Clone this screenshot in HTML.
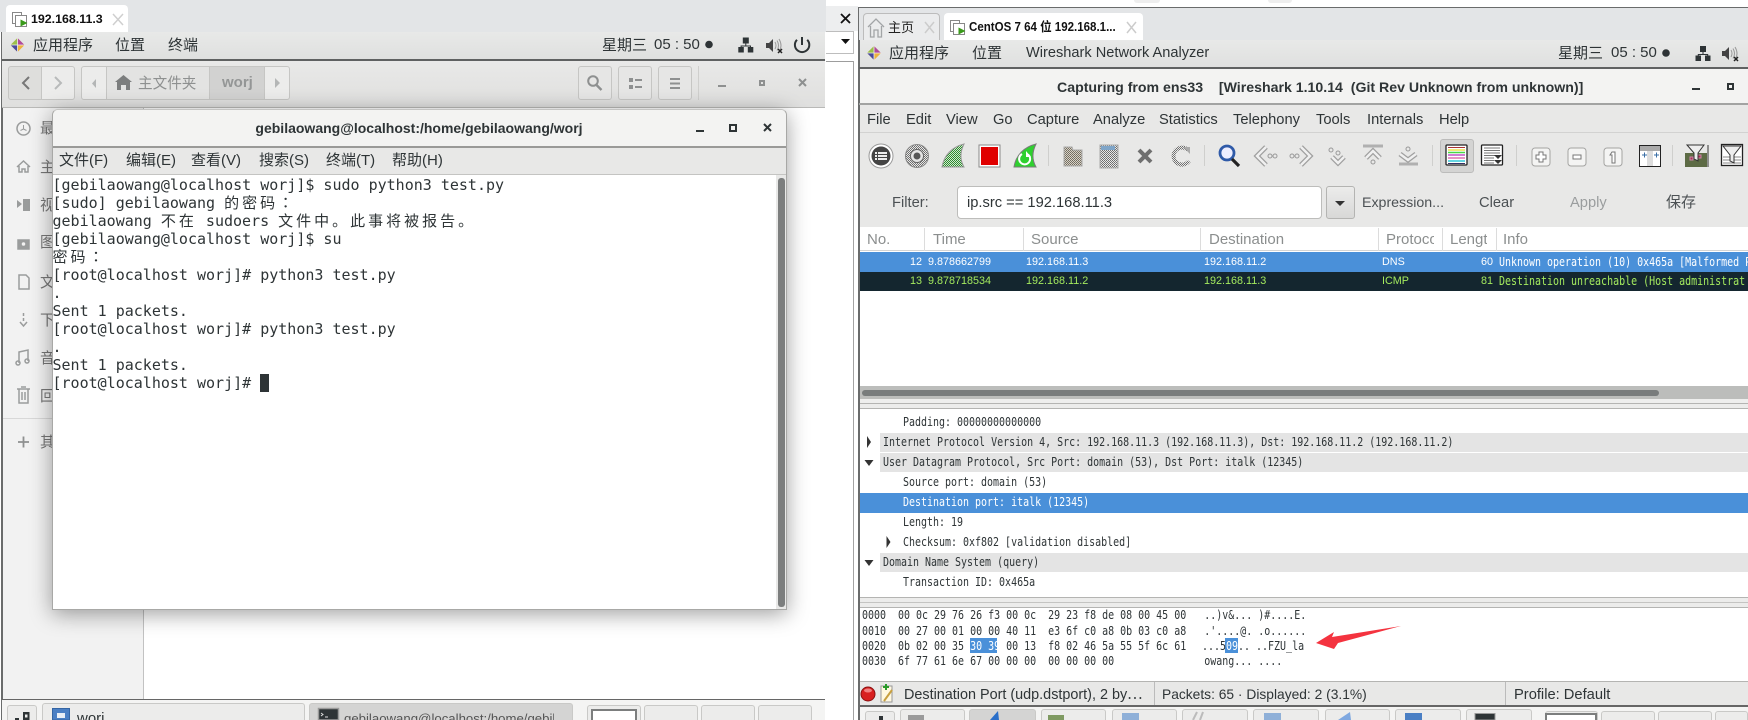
<!DOCTYPE html>
<html><head><meta charset="utf-8"><style>
html,body{margin:0;padding:0;width:1748px;height:720px;overflow:hidden;background:#fff}
*{box-sizing:border-box}
.a{position:absolute}
.t{position:absolute;white-space:pre;line-height:20px;height:20px;font:14.7px/20px "Liberation Sans","Noto Sans CJK SC",sans-serif;color:#2e3436}
.c{font-family:"Noto Sans CJK SC","Liberation Sans",sans-serif}
.m{position:absolute;white-space:pre;font:12px/16px "DejaVu Sans Mono",monospace;color:#2e3436;transform:scaleX(.831);transform-origin:0 0;height:16px}
.tm{position:absolute;left:52.5px;white-space:pre;font:15px/18px "DejaVu Sans Mono",monospace;color:#2e3436;height:18px}
.tm span{font-family:"Noto Sans CJK SC",sans-serif;letter-spacing:3px;font-size:15px}
.tm span.k{font-family:"Noto Sans CJK TC",sans-serif}
.n{position:absolute;white-space:pre;font:10.8px/16px "Liberation Sans",sans-serif;height:16px}
.b{position:absolute;border:1px solid #c6c6c4;border-radius:3px}
.hd{position:absolute;white-space:pre;font:15px/20px "Liberation Sans",sans-serif;color:#8b8e8e;top:230px}
.dv{position:absolute;width:1px;top:228px;height:23px;background:#dcdcdc}
.gr{position:absolute;left:880px;width:868px;height:19px;background:#e4e4e4}
.tb{position:absolute;background:#ececeb;border:1px solid #c9c9c7;border-bottom:0;border-radius:3px 3px 0 0}
.clip{position:absolute;overflow:hidden;height:16px;left:1499px;width:249px}
</style></head><body>

<!-- LEFT VM -->
<div class="a" style="left:0;top:0;width:826px;height:32px;background:#e3e5e7"></div>
<div class="a" style="left:6px;top:5px;width:122px;height:27px;background:#fff;border-radius:4px 4px 0 0"></div>
<div class="t" style="left:31px;top:9px;font-size:12.4px;font-weight:bold;color:#111">192.168.11.3</div>
<div class="a" style="left:1px;top:32px;width:1.5px;height:688px;background:#6a6c6c"></div>
<div class="a" style="left:2px;top:32px;width:823px;height:27px;background:linear-gradient(#e8e9e8,#dfe0df)"></div>
<div class="a" style="left:2px;top:59px;width:823px;height:1.5px;background:#5f6161"></div>
<div class="t c" style="left:33px;top:35px;font-size:15px">应用程序</div>
<div class="t c" style="left:115px;top:35px;font-size:15px">位置</div>
<div class="t c" style="left:168px;top:35px;font-size:15px">终端</div>
<div class="t c" style="left:602px;top:35px;font-size:15px">星期三</div>
<div class="t" style="left:654px;top:35px;font-size:15px">05 : 50</div>

<div class="a" style="left:2px;top:61px;width:823px;height:46px;background:linear-gradient(#e9e9e8,#dfdfde)"></div>
<div class="a" style="left:2px;top:107px;width:823px;height:1px;background:#b9b9b7"></div>
<div class="b" style="left:8px;top:66px;width:34px;height:34px;background:#dededc;border-radius:3px 0 0 3px"></div>
<div class="b" style="left:41px;top:66px;width:34px;height:34px;background:#ececeb;border-radius:0 3px 3px 0"></div>
<div class="b" style="left:81px;top:66px;width:26px;height:34px;background:#ececeb;border-radius:3px 0 0 3px"></div>
<div class="b" style="left:106px;top:66px;width:104px;height:34px;background:#e3e3e2;border-radius:0"></div>
<div class="b" style="left:209px;top:66px;width:56px;height:34px;background:#d2d2d1;border-radius:0"></div>
<div class="b" style="left:264px;top:66px;width:26px;height:34px;background:#ececeb;border-radius:0 3px 3px 0"></div>
<div class="t c" style="left:138px;top:73px;font-size:14.6px;color:#8e9090">主文件夹</div>
<div class="t" style="left:222px;top:73px;font-size:15px;font-weight:bold;color:#949696">worj</div>
<div class="b" style="left:578px;top:66px;width:34px;height:34px;background:#e6e6e5"></div>
<div class="b" style="left:618px;top:66px;width:34px;height:34px;background:#e6e6e5"></div>
<div class="b" style="left:658px;top:66px;width:34px;height:34px;background:#e6e6e5"></div>
<div class="a" style="left:698px;top:66px;width:1px;height:34px;background:#cfcfcd"></div>

<!-- sidebar -->
<div class="a" style="left:2.5px;top:108px;width:141px;height:591px;background:#f2f2f2;border-right:1px solid #c2c2c2"></div>
<div class="a" style="left:2.5px;top:418px;width:141px;height:1px;background:#d8d8d8"></div>
<div class="t c" style="left:40px;top:118px;font-size:15px;color:#777">最近使用</div>
<div class="t c" style="left:40px;top:157px;font-size:15px;color:#777">主目录</div>
<div class="t c" style="left:40px;top:195px;font-size:15px;color:#777">视频</div>
<div class="t c" style="left:40px;top:232px;font-size:15px;color:#777">图片</div>
<div class="t c" style="left:40px;top:272px;font-size:15px;color:#777">文档</div>
<div class="t c" style="left:40px;top:310px;font-size:15px;color:#777">下载</div>
<div class="t c" style="left:40px;top:348px;font-size:15px;color:#777">音乐</div>
<div class="t c" style="left:40px;top:386px;font-size:15px;color:#777">回收站</div>
<div class="t c" style="left:40px;top:432px;font-size:15px;color:#777">其他位置</div>

<!-- left taskbar -->
<div class="a" style="left:2px;top:699px;width:823px;height:1.5px;background:#666"></div>
<div class="a" style="left:2px;top:700px;width:823px;height:20px;background:#f4f4f3"></div>
<div class="tb" style="left:7px;top:705px;width:30px;height:15px"></div>
<div class="tb" style="left:42px;top:703px;width:263px;height:17px"></div>
<div class="tb" style="left:309px;top:703px;width:264px;height:17px;background:#d4d4d3"></div>
<div class="t" style="left:77px;top:709px;height:11px;overflow:hidden;font-size:15px">worj</div>
<div class="t" style="left:344px;top:709px;height:11px;font-size:13.2px;width:210px;overflow:hidden;color:#555">gebilaowang@localhost:/home/gebilaowang</div>
<div class="tb" style="left:587px;top:705px;width:54px;height:15px"></div>
<div class="a" style="left:591px;top:709px;width:46px;height:11px;background:#fff;border:2px solid #7c7e7e;border-bottom:0"></div>
<div class="tb" style="left:644px;top:705px;width:54px;height:15px"></div>
<div class="tb" style="left:701px;top:705px;width:54px;height:15px"></div>
<div class="tb" style="left:758px;top:705px;width:54px;height:15px"></div>

<!-- RIGHT VM -->
<div class="a" style="left:826px;top:6px;width:32px;height:25px;background:#edeeef"></div>
<div class="a" style="left:1134px;top:0;width:26px;height:3px;background:#eee;border-radius:0 0 3px 3px"></div>
<div class="a" style="left:1268px;top:0;width:24px;height:3px;background:#eee;border-radius:0 0 3px 3px"></div>
<div class="a" style="left:826px;top:31px;width:28px;height:23px;background:#fff;border:1px solid #bdbdbd;border-left:0"></div>
<div class="a" style="left:826px;top:61px;width:28px;height:1px;background:#9d9d9d"></div>
<div class="a" style="left:853px;top:61px;width:1px;height:659px;background:#a3a3a3"></div>
<div class="a" style="left:858px;top:7px;width:1.5px;height:713px;background:#6a6c6c"></div>
<div class="a" style="left:858px;top:7px;width:890px;height:1px;background:#6a6c6c"></div>
<div class="a" style="left:859px;top:8px;width:889px;height:32px;background:#e3e5e7"></div>
<div class="a" style="left:863px;top:13px;width:77px;height:27px;background:#ebeced;border:1px solid #bcbcbc;border-bottom:0;border-radius:4px 4px 0 0"></div>
<div class="a" style="left:944px;top:13px;width:199px;height:27px;background:#fff;border-radius:4px 4px 0 0"></div>
<div class="t c" style="left:888px;top:17px;font-size:13px;color:#222">主页</div>
<div class="t" style="left:969px;top:17px;font-size:12.6px;font-weight:bold;color:#111;transform:scaleX(.915);transform-origin:0 0">CentOS 7 64 位 192.168.1...</div>
<div class="a" style="left:860px;top:40px;width:888px;height:27px;background:linear-gradient(#e8e9e8,#dfe0df)"></div>
<div class="a" style="left:859px;top:67px;width:889px;height:1.5px;background:#5f6161"></div>
<div class="t c" style="left:889px;top:43px;font-size:15px">应用程序</div>
<div class="t c" style="left:972px;top:43px;font-size:15px">位置</div>
<div class="t" style="left:1026px;top:43px;font-size:14.6px">Wireshark Network Analyzer</div>
<div class="t c" style="left:1558px;top:43px;font-size:15px">星期三</div>
<div class="t" style="left:1611px;top:43px;font-size:15px">05 : 50</div>

<div class="a" style="left:860px;top:69px;width:888px;height:34px;background:#f3f3f2"></div>
<div class="a" style="left:859px;top:103px;width:889px;height:1.5px;background:#a2a3a2"></div>
<div class="t" style="left:1057px;top:77px;font-size:14.15px;font-weight:bold;color:#2e3436">Capturing from ens33    [Wireshark 1.10.14  (Git Rev Unknown from unknown)]</div>
<div class="a" style="left:860px;top:105px;width:888px;height:122px;background:#e8e8e7"></div>
<div class="a" style="left:860px;top:132px;width:888px;height:1px;background:#d2d2d1"></div>
<div class="t" style="left:867px;top:110px">File</div>
<div class="t" style="left:906px;top:110px">Edit</div>
<div class="t" style="left:946px;top:110px">View</div>
<div class="t" style="left:993px;top:110px">Go</div>
<div class="t" style="left:1027px;top:110px">Capture</div>
<div class="t" style="left:1093px;top:110px">Analyze</div>
<div class="t" style="left:1159px;top:110px">Statistics</div>
<div class="t" style="left:1233px;top:110px">Telephony</div>
<div class="t" style="left:1316px;top:110px">Tools</div>
<div class="t" style="left:1367px;top:110px">Internals</div>
<div class="t" style="left:1439px;top:110px">Help</div>

<div class="a" style="left:1440px;top:139px;width:34px;height:34px;background:#d4d4d3;border:1px solid #bcbcbb;border-radius:3px"></div>

<div class="t" style="left:892px;top:193px;color:#4c5154">Filter:</div>
<div class="a" style="left:957px;top:186px;width:365px;height:33px;background:#fff;border:1px solid #bdbdbb;border-radius:4px"></div>
<div class="t" style="left:967px;top:193px">ip.src == 192.168.11.3</div>
<div class="a" style="left:1326px;top:186px;width:29px;height:33px;background:linear-gradient(#ececeb,#d8d8d7);border:1px solid #b4b4b2;border-radius:3px"></div>
<div class="t" style="left:1362px;top:193px;font-size:14.2px;color:#4c5154">Expression...</div>
<div class="t" style="left:1479px;top:193px;color:#4c5154">Clear</div>
<div class="t" style="left:1570px;top:193px;color:#9a9d9e">Apply</div>
<div class="t c" style="left:1666px;top:192px;color:#4c5154;font-size:15px">保存</div>

<!-- packet list -->
<div class="a" style="left:860px;top:227px;width:888px;height:24px;background:#fff;border-bottom:1px solid #d4d4d4"></div>
<div class="hd" style="left:867px">No.</div><div class="dv" style="left:924px"></div>
<div class="hd" style="left:933px">Time</div><div class="dv" style="left:1023px"></div>
<div class="hd" style="left:1031px">Source</div><div class="dv" style="left:1200px"></div>
<div class="hd" style="left:1209px">Destination</div><div class="dv" style="left:1378px"></div>
<div class="hd" style="left:1386px;width:48px;overflow:hidden">Protocol</div><div class="dv" style="left:1442px"></div>
<div class="hd" style="left:1450px;width:37px;overflow:hidden">Length</div><div class="dv" style="left:1496px"></div>
<div class="hd" style="left:1503px">Info</div>

<div class="a" style="left:860px;top:252px;width:888px;height:20px;background:#4a90d9"></div>
<div class="a" style="left:860px;top:272px;width:888px;height:19px;background:#14262f"></div>
<div class="n" style="left:910px;top:254px;color:#fff">12</div>
<div class="n" style="left:928px;top:254px;color:#fff">9.878662799</div>
<div class="n" style="left:1026px;top:254px;color:#fff">192.168.11.3</div>
<div class="n" style="left:1204px;top:254px;color:#fff">192.168.11.2</div>
<div class="n" style="left:1382px;top:254px;color:#fff">DNS</div>
<div class="n" style="left:1481px;top:254px;color:#fff">60</div>
<div class="clip" style="top:254px"><div class="m" style="left:0;top:0;color:#fff">Unknown operation (10) 0x465a [Malformed P</div></div>
<div class="n" style="left:910px;top:273px;color:#a4ea5e">13</div>
<div class="n" style="left:928px;top:273px;color:#a4ea5e">9.878718534</div>
<div class="n" style="left:1026px;top:273px;color:#a4ea5e">192.168.11.2</div>
<div class="n" style="left:1204px;top:273px;color:#a4ea5e">192.168.11.3</div>
<div class="n" style="left:1382px;top:273px;color:#a4ea5e">ICMP</div>
<div class="n" style="left:1481px;top:273px;color:#a4ea5e">81</div>
<div class="clip" style="top:273px"><div class="m" style="left:0;top:0;color:#a4ea5e">Destination unreachable (Host administrat</div></div>

<!-- hscroll -->
<div class="a" style="left:860px;top:386px;width:888px;height:13px;background:#bcbdbb"></div>
<div class="a" style="left:862px;top:390px;width:797px;height:6px;background:#797c7c;border-radius:3px"></div>
<div class="a" style="left:860px;top:399px;width:888px;height:4px;background:#eeeeed"></div>
<div class="a" style="left:860px;top:403px;width:888px;height:1px;background:#b4b4b2"></div>
<div class="a" style="left:860px;top:404px;width:888px;height:4px;background:#ececeb"></div>
<div class="a" style="left:860px;top:408px;width:888px;height:1px;background:#b4b4b2"></div>

<!-- details -->
<div class="gr" style="top:433px"></div>
<div class="gr" style="top:453px"></div>
<div class="gr" style="top:553px"></div>
<div class="a" style="left:860px;top:493px;width:888px;height:20px;background:#4a90d9"></div>
<div class="m" style="left:903px;top:414px">Padding: 00000000000000</div>
<div class="m" style="left:883px;top:434px">Internet Protocol Version 4, Src: 192.168.11.3 (192.168.11.3), Dst: 192.168.11.2 (192.168.11.2)</div>
<div class="m" style="left:883px;top:454px">User Datagram Protocol, Src Port: domain (53), Dst Port: italk (12345)</div>
<div class="m" style="left:903px;top:474px">Source port: domain (53)</div>
<div class="m" style="left:903px;top:494px;color:#fff">Destination port: italk (12345)</div>
<div class="m" style="left:903px;top:514px">Length: 19</div>
<div class="m" style="left:903px;top:534px">Checksum: 0xf802 [validation disabled]</div>
<div class="m" style="left:883px;top:554px">Domain Name System (query)</div>
<div class="m" style="left:903px;top:574px">Transaction ID: 0x465a</div>

<div class="a" style="left:860px;top:597px;width:888px;height:1px;background:#b4b4b2"></div>
<div class="a" style="left:860px;top:598px;width:888px;height:9px;background:#ececeb"></div>
<div class="a" style="left:860px;top:602px;width:888px;height:1px;background:#c4c4c2"></div>
<div class="a" style="left:860px;top:607px;width:888px;height:1px;background:#b4b4b2"></div>

<!-- hex -->
<div class="a" style="left:970px;top:638px;width:27px;height:15px;background:#4a90d9"></div>
<div class="a" style="left:1225px;top:638px;width:13px;height:15px;background:#4a90d9"></div>
<div class="m" style="left:862px;top:607px">0000  00 0c 29 76 26 f3 00 0c  29 23 f8 de 08 00 45 00   ..)v&amp;... )#....E.</div>
<div class="m" style="left:862px;top:622.5px">0010  00 27 00 01 00 00 40 11  e3 6f c0 a8 0b 03 c0 a8   .'....@. .o......</div>
<div class="m" style="left:862px;top:638px">0020  0b 02 00 35 <span style="color:#fff">30 39</span> 00 13  f8 02 46 5a 55 5f 6c 61</div>
<div class="m" style="left:1202px;top:638px">...5<span style="color:#fff">09</span>.. ..FZU_la</div>
<div class="m" style="left:862px;top:653px">0030  6f 77 61 6e 67 00 00 00  00 00 00 00               owang... ....</div>

<!-- status bar -->
<div class="a" style="left:860px;top:681px;width:888px;height:1px;background:#b4b4b2"></div>
<div class="a" style="left:860px;top:682px;width:888px;height:23px;background:#e8e8e7"></div>
<div class="a" style="left:860px;top:705px;width:888px;height:1.5px;background:#666"></div>
<div class="a" style="left:1154px;top:682px;width:1px;height:23px;background:#bbb"></div>
<div class="a" style="left:1505px;top:682px;width:1px;height:23px;background:#bbb"></div>
<div class="t" style="left:904px;top:685px;font-size:14.4px">Destination Port (udp.dstport), 2 by⋯</div>
<div class="t" style="left:1162px;top:685px;font-size:13.8px">Packets: 65 · Displayed: 2 (3.1%)</div>
<div class="t" style="left:1514px;top:685px">Profile: Default</div>

<!-- right taskbar -->
<div class="a" style="left:860px;top:707px;width:888px;height:13px;background:#f4f4f3"></div>
<div class="tb" style="left:865px;top:711px;width:30px;height:9px"></div>
<div class="tb" style="left:900px;top:709px;width:65px;height:11px"></div>
<div class="tb" style="left:969px;top:709px;width:67px;height:11px;background:#d4d4d3"></div>
<div class="tb" style="left:1041px;top:709px;width:65px;height:11px"></div>
<div class="tb" style="left:1112px;top:709px;width:65px;height:11px"></div>
<div class="tb" style="left:1182px;top:709px;width:66px;height:11px"></div>
<div class="tb" style="left:1253px;top:709px;width:66px;height:11px"></div>
<div class="tb" style="left:1325px;top:709px;width:65px;height:11px"></div>
<div class="tb" style="left:1395px;top:709px;width:66px;height:11px"></div>
<div class="tb" style="left:1466px;top:709px;width:66px;height:11px"></div>
<div class="tb" style="left:1545px;top:711px;width:53px;height:9px"></div>
<div class="a" style="left:1545px;top:713px;width:52px;height:7px;background:#fff;border:2px solid #7c7e7e;border-bottom:0"></div>
<div class="tb" style="left:1601px;top:711px;width:54px;height:9px"></div>
<div class="tb" style="left:1658px;top:711px;width:54px;height:9px"></div>
<div class="tb" style="left:1715px;top:711px;width:33px;height:9px"></div>

<!-- ICONS -->
<svg class="a" style="left:0;top:0" width="1748" height="720" viewBox="0 0 1748 720">
<defs>
<pattern id="dg" width="2" height="2" patternUnits="userSpaceOnUse"><rect width="2" height="2" fill="#e8e8e7"/><rect width="1" height="1" fill="#6b6b6b"/><rect x="1" y="1" width="1" height="1" fill="#777"/></pattern>
<pattern id="dn" width="2" height="2" patternUnits="userSpaceOnUse"><rect width="2" height="2" fill="#d8d2c6"/><rect width="1" height="1" fill="#6f6a5e"/><rect x="1" y="1" width="1" height="1" fill="#7a7468"/></pattern>
<pattern id="dgr" width="2" height="2" patternUnits="userSpaceOnUse"><rect width="2" height="2" fill="#cfe8cf"/><rect width="1" height="1" fill="#2e8b2e"/><rect x="1" y="1" width="1" height="1" fill="#2e8b2e"/></pattern>
<g id="logo"><path d="M0-7L7 0 0 7-7 0Z" fill="#d9b56a"/><path d="M0-7L7 0H0Z" fill="#b04a9c"/><path d="M0-7L-7 0H0Z" fill="#9bbf4a"/><path d="M-7 0L0 7V0Z" fill="#4a4a9c"/><path d="M7 0L0 7V0Z" fill="#eeb23e"/><path d="M0-7V7M-7 0H7" stroke="#eee" stroke-width=".8"/></g>
<g id="net" fill="#2e3436"><rect x="4.5" y="0" width="6" height="6"/><rect x="0" y="9.5" width="5.5" height="5.5"/><rect x="9.5" y="9.5" width="5.5" height="5.5"/><path d="M7 5.5h1v2.500h4.700v2h-1v-1H3.300v1h-1v-2H7z"/></g>
<g id="spk"><path d="M0 5h3l4-4v13l-4-4H0z" fill="#444"/><path d="M9 4q2 3.500 0 7M11 2.500q3 5 0 10M13 1q4 6.500 0 13" fill="none" stroke="#999" stroke-width="1"/><path d="M12 11l4 4M16 11l-4 4" stroke="#222" stroke-width="1.500"/></g>
<g id="pi"><rect x="0" y="0" width="9" height="11" fill="none" stroke="#888"/><rect x="3" y="3" width="11" height="11" fill="#fff" stroke="#888"/><path d="M8 7l7 3.500-7 3.500z" fill="#3a9a1a"/></g>
</defs>

<!-- left top -->
<use href="#pi" x="12.500" y="12.500"/>
<path d="M113 14l10 11M123 14l-10 11" stroke="#cfcfcf" stroke-width="1.500"/>
<use href="#logo" x="17.500" y="45"/>
<circle cx="709" cy="44.500" r="3.800" fill="#2e3436"/>
<use href="#net" x="738.300" y="37.500"/>
<use href="#spk" x="766" y="38"/>
<path d="M797 39.800a7.200 7.200 0 1 0 10.200 0" fill="none" stroke="#2e3436" stroke-width="2"/><path d="M802 37v8" stroke="#2e3436" stroke-width="2"/>

<!-- nautilus -->
<path d="M29 77l-6 6 6 6" fill="none" stroke="#777" stroke-width="2"/>
<path d="M55 77l6 6-6 6" fill="none" stroke="#b8baba" stroke-width="2"/>
<path d="M96 79l-4 4.500 4 4.500z" fill="#b4b6b6"/>
<path d="M275 78l5 5-5 5z" fill="#b4b6b6"/>
<path d="M115 82l8.500-7 8.500 7h-2v8h-4v-5h-5v5h-4v-8z" fill="#7c7e7e"/>
<circle cx="593" cy="81" r="4.800" fill="none" stroke="#8e9090" stroke-width="2"/><path d="M596.500 85l5 5" stroke="#8e9090" stroke-width="2.400"/>
<path d="M629 78h4v4h-4zM629 85h4v4h-4zM635 79h7v2h-7zM635 86h7v2h-7z" fill="#8e9090"/>
<path d="M670 78h10v2h-10zM670 82.500h10v2h-10zM670 87h10v2h-10z" fill="#8e9090"/>
<path d="M718 85h8v2h-8z" fill="#8e9090"/>
<path d="M759 80h6v6h-6zM761 82v2h2v-2z" fill="#8e9090" fill-rule="evenodd"/>
<path d="M799 79l7 7M806 79l-7 7" stroke="#8e9090" stroke-width="2"/>

<!-- sidebar icons -->
<g fill="none" stroke="#9a9c9c" stroke-width="1.500">
<circle cx="23.500" cy="128.500" r="6.500"/><path d="M23.500 125v4l-3 1.500M23.500 129l3 1.500" stroke-width="1"/>
<path d="M17 167l6.500-6 6.500 6M19 166v6h3v-3h3v3h3v-6"/>
<path d="M17 200v8l5-4zM23 199h7v12h-7z" fill="#9a9c9c" stroke="none"/>
<path d="M18 240h11v9h-11z" fill="#9a9c9c"/><circle cx="23.500" cy="244" r="2.500" fill="#f2f2f2"/>
<path d="M19 275h7l3 3v11h-10z"/>
<path d="M23.500 313v3M23.500 318v3M20 322l3.500 4 3.500-4" />
<path d="M19 363v-11l9-2v11" /><circle cx="18" cy="363" r="2"/><circle cx="27" cy="361" r="2"/>
<path d="M17 389h13M19 389v14h9v-14M21 387h5M22 392v8M25 392v8"/>
<path d="M18 442h11M23.500 436.500v11" stroke="#8e9090" stroke-width="1.800"/>
</g>

<!-- left taskbar icons -->
<path d="M15 718h4v2h-4zM23 712h6.500v8h-6.500zM25 714.500v3h2.500v-3z" fill="#2e3436" fill-rule="evenodd"/>
<rect x="52.500" y="708.500" width="17" height="11.500" fill="#4a7fc4" stroke="#3465a4"/><rect x="57" y="713" width="8" height="5" fill="#e8eef6"/>
<rect x="318.500" y="708.500" width="20" height="11.500" fill="#2e3436" stroke="#9a9a9a" stroke-width="1.500"/><path d="M321 713l2 1.500-2 1.500M325 717h3" stroke="#ddd" fill="none"/>

<!-- right top -->
<path d="M841 14l9 9M850 14l-9 9" stroke="#111" stroke-width="1.800"/>
<path d="M841 39h9l-4.500 5z" fill="#111"/>
<path d="M868 27l8-8 8 8M870.500 26v11h3.500v-7h4v7h3.500v-11" fill="none" stroke="#a2a5a7" stroke-width="1.300"/>
<path d="M925 22l9 11M934 22l-9 11" stroke="#ccc" stroke-width="1.500"/>
<use href="#pi" x="950.500" y="20.500"/>
<path d="M1127 22l9 11M1136 22l-9 11" stroke="#ccc" stroke-width="1.500"/>
<use href="#logo" x="874" y="53"/>
<circle cx="1666" cy="53" r="3.800" fill="#2e3436"/>
<use href="#net" x="1695.500" y="46"/>
<use href="#spk" x="1722" y="46"/>
<path d="M1692 88h8v2h-8zM1727 83h7v7h-7zM1729 85v3h3v-3z" fill="#2e3436" fill-rule="evenodd"/>

<!-- toolbar -->
<circle cx="881" cy="156" r="12" fill="#fff" stroke="#9a9a9a"/><circle cx="881" cy="156" r="9.500" fill="#444"/>
<path d="M875 152h2v2h-2zM878 152h9v2h-9zM875 155h2v2h-2zM878 155h9v2h-9zM875 158h2v2h-2zM878 158h9v2h-9z" fill="#eee"/>
<circle cx="917" cy="156" r="11.500" fill="url(#dg)" stroke="#888"/><circle cx="917" cy="156" r="6.500" fill="#e4e4e4" stroke="#666"/><circle cx="917" cy="156" r="3.500" fill="#555"/>
<path d="M942 167C944 155 952 147 964 144 960 152 960 160 964 167Z" fill="url(#dgr)" stroke="#999"/>
<rect x="979" y="145" width="21" height="22" fill="#fff" stroke="#8a8a8a"/><rect x="981" y="147" width="17" height="18" fill="#e00000"/>
<path d="M1014 167C1016 155 1024 147 1036 144 1032 152 1032 160 1036 167Z" fill="#2fd02f" stroke="#7a7a7a"/>
<path d="M1022 154a5.500 5.500 0 1 0 6 .5" fill="none" stroke="#fff" stroke-width="2"/><path d="M1026 151v6h5z" fill="#fff"/>
<path d="M1048.500 145v21M1204.500 145v21M1432.500 145v21M1516.500 145v21M1672.500 145v21" stroke="#cfcfcd"/>
<path d="M1064 147h8l1 3h9v16h-18z" fill="url(#dn)" stroke="#aaa"/>
<path d="M1100 145h18v23h-18z" fill="url(#dg)" stroke="#aaa"/><path d="M1101 146h14v4h-14z" fill="#7fa5c8"/>
<path d="M1139 150l12 12M1151 150l-12 12" stroke="#6f6f6f" stroke-width="4"/>
<path d="M1188 150a8.500 8.500 0 1 0 1 11" fill="none" stroke="url(#dg)" stroke-width="4"/><path d="M1183 147h7v7z" fill="#aaa"/>
<circle cx="1227" cy="153" r="7" fill="#eef" stroke="#2f5aa8" stroke-width="2.800"/><path d="M1232 159l7 7" stroke="#222" stroke-width="3.200"/>
<g fill="none" stroke="#a0a0a0" stroke-width="5">
<path d="M1266 147l-9 9 9 9"/><path d="M1301 147l9 9-9 9"/><path d="M1332 157l6 6 6-6"/><path d="M1366 158l7-7 7 7"/><path d="M1400 154l8 6 8-6"/>
</g>
<g fill="none" stroke="#f0f0f0" stroke-width="2.400">
<path d="M1266 147l-9 9 9 9"/><path d="M1301 147l9 9-9 9"/><path d="M1332 157l6 6 6-6"/><path d="M1366 158l7-7 7 7"/><path d="M1400 154l8 6 8-6"/>
</g>
<g fill="none" stroke="#999"><circle cx="1270" cy="156" r="2"/><circle cx="1275" cy="156" r="2"/><circle cx="1297" cy="156" r="2"/><circle cx="1292" cy="156" r="2"/><circle cx="1331" cy="150" r="2"/><circle cx="1338" cy="153" r="2"/><circle cx="1373" cy="162" r="2"/><circle cx="1408" cy="149" r="2"/></g>
<path d="M1363 146h20M1399 164h19" stroke="#b0b0b0" stroke-width="3"/>
<rect x="1446" y="145" width="21" height="20" rx="1" fill="#fff" stroke="#222" stroke-width="1.300"/>
<path d="M1448 147.500h17" stroke="#a33"/><path d="M1448 150h17" stroke="#eee44c" stroke-width="1.500"/><path d="M1448 152.500h17" stroke="#48d848" stroke-width="1.500"/><path d="M1448 155h17" stroke="#c050c8" stroke-width="1.500"/><path d="M1448 158h17" stroke="#e070b0" stroke-width="1.500"/><path d="M1448 161h17" stroke="#30c8d8" stroke-width="1.500"/><path d="M1448 163.500h17" stroke="#336" />
<rect x="1481.500" y="145" width="21" height="20" rx="1" fill="#fff" stroke="#222" stroke-width="1.300"/>
<path d="M1484 148h16M1484 150.500h16M1484 153h16M1484 155.500h16M1484 158h10M1484 160.500h10M1484 163h10" stroke="#777"/><path d="M1494 155h8l-4 4zM1494 160h8l-4 4z" fill="#333"/>
<g fill="#f4f4f3" stroke="#a4a4a2"><rect x="1532" y="148" width="18" height="18" rx="3"/><rect x="1568" y="148" width="18" height="18" rx="3"/><rect x="1604" y="148" width="18" height="18" rx="3"/></g>
<path d="M1539 152h4v3h3v4h-3v3h-4v-3h-3v-4h3z" fill="#fff" stroke="#777"/><path d="M1573 155h8v4h-8z" fill="#fff" stroke="#777"/><path d="M1612 152h3v11h-3v-8h-2z" fill="#fff" stroke="#777"/>
<rect x="1639.500" y="145.500" width="21" height="21" fill="#fff" stroke="#222"/><rect x="1640" y="146" width="20" height="5" fill="#aaa"/><rect x="1647" y="151" width="6" height="15" fill="#ddd"/><path d="M1642 155h5M1654 155h5M1644.500 152.500v5M1656.500 152.500v5" stroke="#3a6ea5"/>
<rect x="1685" y="153" width="22" height="14" fill="#5d6b45"/><path d="M1690 157h3v3h-3zM1698 155h3v3h-3z" fill="#a35" stroke="#c8a"/><path d="M1687 145h17l-6 8v8l-4-2v-6z" fill="#eee" stroke="#333"/><path d="M1708 145v22" stroke="#333"/>
<rect x="1721.500" y="144.500" width="21" height="21" fill="#fff" stroke="#222" stroke-width="1.300"/><path d="M1723 157h18M1723 160h18M1723 163h18" stroke="#888"/><path d="M1723 146h18l-7 9v8l-4-2v-6z" fill="#eee" stroke="#333"/>
<path d="M1335 201h10l-5 5z" fill="#333"/>

<!-- tree arrows -->
<path d="M867 436v12l4-6z" fill="#333"/><path d="M886.500 536v12l4-6z" fill="#333"/>
<path d="M864.500 460h9l-4.500 6z" fill="#333"/><path d="M864.500 560h9l-4.500 6z" fill="#333"/>

<!-- status icons -->
<circle cx="868" cy="694" r="7" fill="#d82020" stroke="#8a1010"/><ellipse cx="868" cy="690.500" rx="4" ry="2" fill="#f08080"/>
<rect x="881" y="686" width="11" height="16" fill="#fff8e0" stroke="#999"/><path d="M884 701l8-11" stroke="#c8a040" stroke-width="2"/><path d="M886 684v6M883 687h6" stroke="#2a9a2a" stroke-width="2"/>

<!-- taskbar right icons -->
<path d="M879 716h4v4h-4z" fill="#2e3436"/>
<rect x="908" y="715" width="16" height="5" fill="#9a9a9a"/>
<path d="M990 720l8-9 1 9z" fill="#2a6fc9"/>
<rect x="1048" y="715" width="16" height="5" fill="#7f9a62"/>
<rect x="1122" y="713" width="17" height="7" fill="#8fb0d8"/>
<path d="M1193 720l4-8M1200 720l3-8" stroke="#bbb" stroke-width="2"/>
<rect x="1264" y="713" width="17" height="7" fill="#8fb0d8"/>
<path d="M1338 720l12-8 1 8z" fill="#7fa8e0"/>
<rect x="1405" y="713" width="17" height="7" fill="#4a7fc4"/>
<rect x="1475" y="713.500" width="20" height="6.500" fill="#2e3436" stroke="#9a9a9a"/>

<!-- red arrow -->
<path d="M1316 643L1334 632 1332 637 1401 626 1338 643 1334 649Z" fill="#f4333f"/>
</svg>

<!-- TERMINAL -->
<div class="a" style="left:51.5px;top:109px;width:735px;height:501px;background:#fff;border-radius:6px 6px 0 0;box-shadow:0 4px 22px rgba(0,0,0,.38);border:1px solid #a8a8a6;border-top-color:#c4c4c2;z-index:5;overflow:hidden">
<div class="a" style="left:0;top:0;width:733px;height:36px;background:#f3f3f2"></div>
<div class="a" style="left:0;top:36px;width:733px;height:1.500px;background:#9a9a98"></div>
<div class="a" style="left:0;top:38px;width:733px;height:27px;background:#e8e8e7;border-bottom:1px solid #c4c4c2"></div>
<div class="a" style="left:723px;top:65px;width:11px;height:436px;background:#e8e8e7"></div>
<div class="a" style="left:725px;top:68px;width:7px;height:429px;background:#7c7e7e;border-radius:3px"></div>
</div>
<div class="a" style="left:0;top:0;width:1748px;height:720px;z-index:6;overflow:hidden">
<div class="t" style="left:52px;width:734px;text-align:center;top:118px;font-size:14px;font-weight:bold">gebilaowang@localhost:/home/gebilaowang/worj</div>
<div class="t" style="left:59px;top:151px;font-size:15px">文件(F)</div>
<div class="t" style="left:126px;top:151px;font-size:15px">编辑(E)</div>
<div class="t" style="left:191px;top:151px;font-size:15px">查看(V)</div>
<div class="t" style="left:259px;top:151px;font-size:15px">搜索(S)</div>
<div class="t" style="left:326px;top:151px;font-size:15px">终端(T)</div>
<div class="t" style="left:392px;top:151px;font-size:15px">帮助(H)</div>
<svg class="a" style="left:690px;top:118px" width="90" height="20" viewBox="0 0 90 20"><path d="M6 12h8v2H6zM39 6h8v8h-8zM41 8v4h4V8z" fill="#2e3436" fill-rule="evenodd"/><path d="M74 6l7 7M81 6l-7 7" stroke="#2e3436" stroke-width="2"/></svg>
<div class="tm" style="top:176px">[gebilaowang@localhost worj]$ sudo python3 test.py</div>
<div class="tm" style="top:194px">[sudo] gebilaowang <span>的密码</span><span class="k">：</span></div>
<div class="tm" style="top:212px">gebilaowang <span>不在</span> sudoers <span>文件中。此事将被报告。</span></div>
<div class="tm" style="top:230px">[gebilaowang@localhost worj]$ su</div>
<div class="tm" style="top:248px"><span>密码</span><span class="k">：</span></div>
<div class="tm" style="top:266px">[root@localhost worj]# python3 test.py</div>
<div class="tm" style="top:284px">.</div>
<div class="tm" style="top:302px">Sent 1 packets.</div>
<div class="tm" style="top:320px">[root@localhost worj]# python3 test.py</div>
<div class="tm" style="top:338px">.</div>
<div class="tm" style="top:356px">Sent 1 packets.</div>
<div class="tm" style="top:374px">[root@localhost worj]# </div>
<div class="a" style="left:260px;top:374px;width:9px;height:18px;background:#2e3436"></div>
</div>
</body></html>
